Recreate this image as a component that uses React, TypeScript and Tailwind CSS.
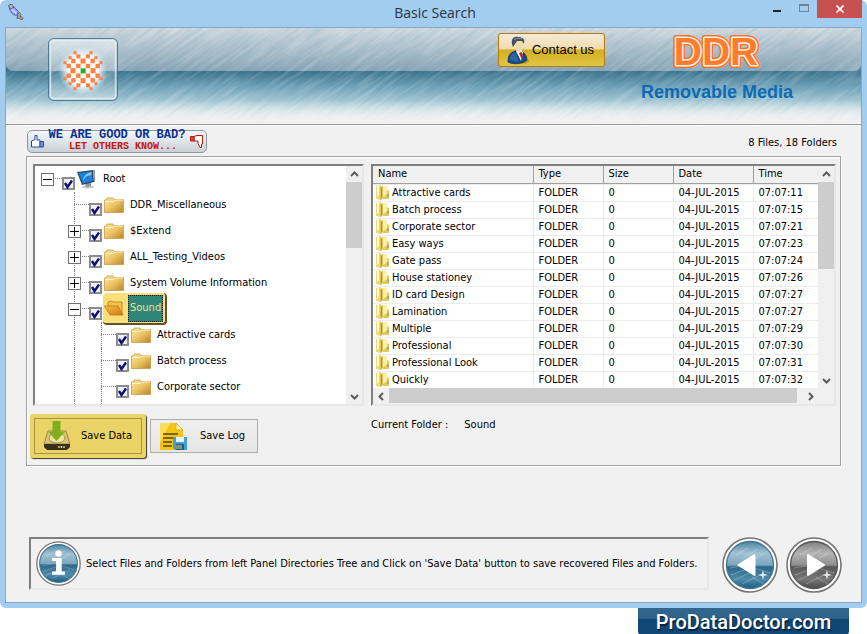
import React from 'react'

type TreeNode = {
  name: string
  level: number
  state: 'open' | 'closed' | 'leaf'
  icon: 'root' | 'folder'
  selected?: boolean
}

const tree: TreeNode[] = [
  { name: 'Root', level: 0, state: 'open', icon: 'root' },
  { name: 'DDR_Miscellaneous', level: 1, state: 'leaf', icon: 'folder' },
  { name: '$Extend', level: 1, state: 'closed', icon: 'folder' },
  { name: 'ALL_Testing_Videos', level: 1, state: 'closed', icon: 'folder' },
  { name: 'System Volume Information', level: 1, state: 'closed', icon: 'folder' },
  { name: 'Sound', level: 1, state: 'open', icon: 'folder', selected: true },
  { name: 'Attractive cards', level: 2, state: 'leaf', icon: 'folder' },
  { name: 'Batch process', level: 2, state: 'leaf', icon: 'folder' },
  { name: 'Corporate sector', level: 2, state: 'leaf', icon: 'folder' },
]

const files = [
  ['Attractive cards', '07:07:11'],
  ['Batch process', '07:07:15'],
  ['Corporate sector', '07:07:21'],
  ['Easy ways', '07:07:23'],
  ['Gate pass', '07:07:24'],
  ['House stationey', '07:07:26'],
  ['ID card Design', '07:07:27'],
  ['Lamination', '07:07:27'],
  ['Multiple', '07:07:29'],
  ['Professional', '07:07:30'],
  ['Professional Look', '07:07:31'],
  ['Quickly', '07:07:32'],
]

const logoCells = [
  [223, 157, 9], [271, 157, 9], [233, 168, 12], [262, 168, 12], [208, 172, 9], [286, 172, 9],
  [218, 182, 13], [247, 182, 15], [276, 182, 13], [193, 187, 9], [301, 187, 9],
  [204, 197, 13], [233, 197, 13], [262, 197, 13], [291, 197, 13],
  [217, 211, 15], [277, 211, 15],
  [204, 226, 13], [233, 226, 13], [262, 226, 13], [291, 226, 13],
  [218, 240, 13], [247, 241, 15], [276, 240, 13], [193, 235, 9], [301, 235, 9],
  [233, 255, 12], [262, 255, 12], [208, 250, 9], [286, 250, 9], [223, 265, 9], [271, 265, 9],
]

const UsbIcon = () => (
  <svg width="16" height="16" viewBox="0 0 16 16" aria-hidden="true">
    <path d="M0.500 1.500L3.500 0l2.500 3-4 2.500z" fill="#b9b2ad" stroke="#5f5a56" />
    <path d="M1.500 5.500L6 3l4.500 4.500L9 11.500 5 10.500z" fill="#8b9ff5" stroke="#5a68b8" />
    <path d="M4 5.500l4.500 4" stroke="#cdd6ff" strokeWidth="1.800" />
    <path d="M9.500 10.500l2-2 1.500 2-1 2 2 .5 1 2-2 .5-2-1.500-2 .5z" fill="#aaa5a2" stroke="#6c6764" />
  </svg>
)

const HeaderTexture = () => (
  <svg className="absolute inset-0 w-full h-full" aria-hidden="true">
    <defs>
      <linearGradient id="lower" x1="0" y1="0" x2="0" y2="1">
        <stop offset="0.45" stopColor="#39718c" />
        <stop offset="0.6" stopColor="#6b9db3" />
        <stop offset="0.78" stopColor="#aacbd7" />
        <stop offset="0.9" stopColor="#dfe8ec" />
        <stop offset="1" stopColor="#f1f1f1" />
      </linearGradient>
      <linearGradient id="upper" x1="0" y1="0" x2="0" y2="1">
        <stop offset="0.15" stopColor="#d0d9df" />
        <stop offset="1" stopColor="#86a3b5" />
      </linearGradient>
      <linearGradient id="fade" x1="0" y1="0" x2="0" y2="1">
        <stop offset="0.75" stopColor="#f1f1f1" stopOpacity="0" />
        <stop offset="1" stopColor="#f1f1f1" />
      </linearGradient>
      <filter id="brush" x="0" y="0" width="100%" height="100%">
        <feTurbulence type="fractalNoise" baseFrequency="0.025 0.3" numOctaves="4" seed="4" />
        <feColorMatrix values="0 0 0 0 1  0 0 0 0 1  0 0 0 0 1  2.6 0 0 0 -1.1" />
      </filter>
      <filter id="brushDark" x="0" y="0" width="100%" height="100%">
        <feTurbulence type="fractalNoise" baseFrequency="0.03 0.35" numOctaves="4" seed="11" />
        <feColorMatrix values="0 0 0 0 0.15  0 0 0 0 0.4  0 0 0 0 0.52  2.6 0 0 0 -1.2" />
      </filter>
    </defs>
    <rect width="100%" height="100%" fill="url(#lower)" />
    <rect width="100%" height="52" y="-9" rx="7" fill="url(#upper)" />
    <g transform="rotate(-36)">
      <rect x="-200" y="-100" width="2000" height="1400" filter="url(#brush)" opacity="0.2" />
      <rect x="-200" y="-100" width="2000" height="1400" filter="url(#brushDark)" opacity="0.24" />
    </g>
    <rect width="100%" height="100%" fill="url(#fade)" />
  </svg>
)

const LogoIcon = () => (
  <svg width="70" height="63" viewBox="142 113 210 189" aria-hidden="true">
    <defs>
      <radialGradient id="glow">
        <stop offset="0.6" stopColor="#fff" stopOpacity="0.95" />
        <stop offset="1" stopColor="#d9f3fb" stopOpacity="0" />
      </radialGradient>
      <linearGradient id="glass" x1="0" y1="0" x2="0" y2="1">
        <stop offset="0" stopColor="#fff" stopOpacity="0.5" />
        <stop offset="0.52" stopColor="#fff" stopOpacity="0.2" />
        <stop offset="0.54" stopColor="#fff" stopOpacity="0.1" />
        <stop offset="1" stopColor="#fff" stopOpacity="0.35" />
      </linearGradient>
    </defs>
    <rect x="144" y="115" width="206" height="185" rx="14" fill="url(#glass)" stroke="#3c6e8a" strokeWidth="3" />
    <rect x="149" y="120" width="196" height="175" rx="10" fill="none" stroke="#e3eef3" strokeWidth="5" opacity="0.8" />
    <circle cx="247" cy="211" r="74" fill="url(#glow)" />
    {logoCells.map(([x, y, s]) => (
      <rect key={`${x}-${y}`} x={x - s / 2} y={y - s / 2} width={s} height={s} fill="#ff7f3c" />
    ))}
    <rect x="240" y="204" width="15" height="15" fill="#1eb422" />
  </svg>
)

const PersonIcon = () => (
  <svg width="22" height="29" viewBox="0 0 22 29" aria-hidden="true">
    <ellipse cx="15" cy="25" rx="7" ry="3" fill="#8a6a10" opacity="0.4" />
    <path d="M1 26c0-7 2-9 7-11h6c4 2 6 5 6 9-4 4-14 5-19 2z" fill="#174a86" stroke="#0c2c58" strokeWidth="0.7" />
    <path d="M3 24c0-5 2-6 5-8l4 10z" fill="#3d79b9" opacity="0.6" />
    <path d="M9 15l6-1 1 3-2 8z" fill="#fff" />
    <path d="M12 17l2-1 2 2-1 6z" fill="#c31f2a" />
    <path d="M7 5c0-3 9-4 9 1 0 6-1 10-4 10S7 11 7 5z" fill="#f0d9ad" />
    <path d="M6 11C3 4 6 0 11 1c5 0 7 2 6 7l-2-3-5 0-2 3z" fill="#3f5062" />
    <path d="M7 4c2-2 6-2 8-1" stroke="#8c9db0" fill="none" />
  </svg>
)

const MonitorIcon = () => (
  <svg width="20" height="20" viewBox="0 0 20 20" aria-hidden="true">
    <ellipse cx="11" cy="18" rx="6" ry="1.500" fill="#c3c6c9" />
    <path d="M8 14l6-1v4l-5 1z" fill="#8f959b" />
    <path d="M0 3L16 1l1 12-12 3z" fill="#30495f" />
    <path d="M1.500 4L14.500 2.500l1 9.500L6 14.500z" fill="#1d7fe0" />
    <path d="M6 12C6 7 10 4 14.500 3v3c-4 0-7 2-8.500 6z" fill="#8cc8fa" />
    <path d="M16 1l2 0v12l-1 0z" fill="#8c99a5" />
  </svg>
)

const FolderIcon = ({ open }: { open?: boolean }) => (
  <svg width="20" height="16" viewBox="0 0 20 16" aria-hidden="true">
    <defs>
      <linearGradient id="folder" x1="0" y1="0" x2="1" y2="1">
        <stop offset="0" stopColor="#fbe9a3" />
        <stop offset="0.5" stopColor="#ecc363" />
        <stop offset="1" stopColor="#b98327" />
      </linearGradient>
      <linearGradient id="folderOpen" x1="0" y1="0" x2="1" y2="1">
        <stop offset="0" stopColor="#f8bf4a" />
        <stop offset="1" stopColor="#cf7615" />
      </linearGradient>
    </defs>
    {open ? (
      <g stroke="#b87a18" strokeWidth="0.8">
        <path d="M4 12V2l4-1 1 1h9v12z" fill="#f3c34c" />
        <path d="M0.500 6H14l5 9H6z" fill="url(#folderOpen)" />
      </g>
    ) : (
      <g>
        <path d="M0.500 3L3 2.500V1h6l1 1.500h9.500v13h-19z" fill="url(#folder)" stroke="#c99a45" strokeWidth="0.8" />
        <path d="M1 4.500h8.500L11 3h8" fill="none" stroke="#fdf4c8" />
      </g>
    )}
  </svg>
)

const SmallFolderIcon = () => (
  <svg className="shrink-0" width="13" height="16" viewBox="0 0 13 16" aria-hidden="true">
    <path d="M0 1l5-1v15l-5-1z" fill="#ecd976" />
    <path d="M1 1l2 0v9l-2 2z" fill="#fffbd2" />
    <path d="M4 2l3-1v12l-2 2-1 0z" fill="#dcc055" />
    <path d="M5 3l1-1v10l-1 2z" fill="#b78f3a" />
    <path d="M7 1h4v4l2 1v8H7z" fill="#e2c95a" />
    <path d="M7 1h4v8l-4 3z" fill="#faf0a6" />
    <path d="M12 9v3" stroke="#5b9a93" />
  </svg>
)

const SaveDataIcon = () => (
  <svg width="28" height="30" viewBox="0 0 28 30" aria-hidden="true">
    <path d="M5 10h18l4 13H1z" fill="#d8c274" stroke="#a08a3a" />
    <ellipse cx="14" cy="17" rx="8" ry="5" fill="#efe0a0" stroke="#a8954e" />
    <path d="M1 23h26v3l-3 3H4l-3-3z" fill="#38301c" />
    <path d="M16 25v2M18.500 25v2M21 25v2" stroke="#f3e08a" strokeWidth="1.3" />
    <path d="M9.500 0h8v11h4l-8 9-8-9h4z" fill="#7db021" />
  </svg>
)

const SaveLogIcon = () => (
  <svg width="28" height="29" viewBox="0 0 28 29" aria-hidden="true">
    <path d="M1 1h16l7 7v20H1z" fill="#f6c417" />
    <path d="M1 1h10l-10 20z" fill="#fadd5a" />
    <path d="M17 1l7 7h-7z" fill="#fdf0a8" stroke="#d8a90c" strokeWidth="0.8" />
    <path d="M4 12h15M4 16h12M4 20h9M4 24h9" stroke="#5a4410" strokeWidth="1.3" />
    <path d="M14 15h14v13H16l-2-2z" fill="#3fa0dc" />
    <path d="M17 15h8v5h-8z" fill="#e4f2fb" />
    <path d="M17 22h8v6h-8z" fill="#1d5e92" />
    <path d="M17 24h6M17 26h6" stroke="#f2cb2c" />
  </svg>
)

const Thumb = ({ down }: { down?: boolean }) => (
  <svg width="13" height="13" viewBox="0 0 13 13" aria-hidden="true">
    {down ? (
      <g stroke="#bf1a0c">
        <path d="M4 1.500L7 .5H12.500V9H11.500V12.500H10L8 8.500V6H4z" fill="#fff" />
        <path d="M0.500 1.500H4V6H0.500z" fill="#e0483a" />
      </g>
    ) : (
      <g stroke="#2747a8">
        <path d="M0.500 6L4 4.500V0.500h2V5h3v7H0.500z" fill="#fff" />
        <path d="M9 6.500h3.500V12H9z" fill="#7b93da" />
      </g>
    )}
  </svg>
)

const Globe = ({ kind }: { kind: 'info' | 'back' | 'next' }) => {
  const gray = kind === 'next'
  const size = kind === 'info' ? 'size-[45px]' : 'size-14'
  return (
    <svg className={`${size} shrink-0 block`} viewBox="0 0 56 56" aria-hidden="true">
      <defs>
        <linearGradient id={`ball-${kind}`} x1="0" y1="0" x2="0" y2="1">
          <stop offset="0" stopColor={gray ? '#808080' : '#4b86a4'} />
          <stop offset="0.25" stopColor={gray ? '#b4b4b4' : '#a3c3d3'} />
          <stop offset="0.5" stopColor={gray ? '#8f8f8f' : '#7aa7bf'} />
          <stop offset="0.54" stopColor={gray ? '#575757' : '#2b6788'} />
          <stop offset="0.8" stopColor={gray ? '#777' : '#4d8cab'} />
          <stop offset="1" stopColor={gray ? '#4b4b4b' : '#1d5c82'} />
        </linearGradient>
      </defs>
      <circle cx="28" cy="28" r="27" fill="#fdfdfd" stroke="#757575" strokeWidth="1.6" />
      <circle cx="28" cy="28" r="23.500" fill={`url(#ball-${kind})`} stroke={gray ? '#555' : '#3f7390'} strokeWidth="1.3" />
      <path
        d="M9 38l16-6M12 43l20-9M20 47l22-11M8 31l12-2M32 31l16 5M30 40l12 7M14 18l12-7M20 22l16-10M32 22l10-6"
        stroke="#fff"
        strokeWidth="1"
        opacity="0.25"
      />
      {kind === 'info' && (
        <g fill="#fff">
          <circle cx="28" cy="15.500" r="4" />
          <path d="M20 21h12v17h4v4H20v-4h5V25h-5z" />
        </g>
      )}
      {kind === 'back' && <path d="M16.500 28L32.500 18v20z" fill="#fff" stroke="#fff" strokeWidth="2" strokeLinejoin="round" />}
      {kind === 'next' && <path d="M38 28L22 18v20z" fill="#fff" stroke="#fff" strokeWidth="2" strokeLinejoin="round" />}
      {kind !== 'info' && (
        <path d="M41 33l1 4 4 1-4 1-1 4-1-4-4-1 4-1z" fill="#fff" opacity="0.85" />
      )}
    </svg>
  )
}

const Arrow = ({ dir }: { dir: 'up' | 'down' | 'left' | 'right' }) => {
  const paths = {
    up: 'M1 6L4.500 2.500L8 6',
    down: 'M1 3L4.500 6.500L8 3',
    left: 'M6 1L2.500 4.500L6 8',
    right: 'M3 1L6.500 4.500L3 8',
  }
  return (
    <button aria-label={`Scroll ${dir}`} className="size-4 shrink-0 flex items-center justify-center">
      <svg width="9" height="9" viewBox="0 0 9 9">
        <path d={paths[dir]} fill="none" stroke="#5c5c5c" strokeWidth="2" />
      </svg>
    </button>
  )
}

const Guide = ({ node, depth }: { node: TreeNode; depth: number }) => {
  if (depth < node.level) {
    return (
      <span className="w-[27px] h-full shrink-0 flex pl-3">
        {depth > 0 && <span className="border-l border-dotted border-[#808080]" />}
      </span>
    )
  }
  const below = node.level > 0
  return (
    <span className="relative w-[27px] h-full shrink-0 flex items-center">
      {below && <span className="absolute left-3 inset-y-0 border-l border-dotted border-[#808080]" />}
      <span className="absolute left-3 right-0 top-3 border-t border-dotted border-[#808080]" />
      {node.state !== 'leaf' && (
        <button
          aria-label={node.state === 'open' ? `Collapse ${node.name}` : `Expand ${node.name}`}
          className="relative ml-1.5 size-[13px] bg-white border border-[#707070] flex items-center justify-center"
        >
          <svg width="9" height="9" viewBox="0 0 9 9">
            <path d={node.state === 'open' ? 'M0 4.500h9' : 'M0 4.500h9M4.500 0v9'} stroke="#000" />
          </svg>
        </button>
      )}
    </span>
  )
}

const TreeRow = ({ node }: { node: TreeNode }) => {
  const id = `node-${node.level}-${node.name}`
  return (
    <li className="h-[26px] flex items-center">
      {Array.from({ length: node.level + 1 }, (_, depth) => (
        <Guide key={depth} node={node} depth={depth} />
      ))}
      <span className="relative size-[13px] mt-2 shrink-0">
        <input
          id={id}
          type="checkbox"
          defaultChecked
          className="peer block appearance-none size-[13px] bg-[#f2f2f2] border-2 border-[#8c8c8c]"
        />
        <svg className="hidden peer-checked:block absolute inset-0 pointer-events-none" width="13" height="13" viewBox="0 0 13 13">
          <path d="M3 6l2.500 4L10 3.500" fill="none" stroke="#0d0d7c" strokeWidth="2.400" />
        </svg>
      </span>
      {node.selected ? (
        <span className="ml-px h-8 flex items-center gap-1 bg-[#fbe07a] pl-px pr-0.5 rounded-sm border-r-2 border-b-2 border-[#5e5230]">
          <FolderIcon open />
          <label htmlFor={id} className="h-[27px] px-px flex items-center bg-[#2f8577] border border-dotted border-[#1c1c1c] text-[#f1e493]">
            {node.name}
          </label>
        </span>
      ) : (
        <>
          <span className="ml-0.5 shrink-0">{node.icon === 'root' ? <MonitorIcon /> : <FolderIcon />}</span>
          <label htmlFor={id} className="ml-1.5">{node.name}</label>
        </>
      )}
    </li>
  )
}

const FileTable = () => (
  <table className="flex-1 min-w-0 table-fixed border-collapse text-left">
    <colgroup>
      <col />
      <col className="w-[70px]" />
      <col className="w-[70px]" />
      <col className="w-20" />
      <col className="w-[65px]" />
    </colgroup>
    <thead>
      <tr className="h-[17px] bg-[#f0f0f0]">
        {['Name', 'Type', 'Size', 'Date', 'Time'].map((head) => (
          <th key={head} className="p-0 pl-[5px] font-normal border-r border-b border-[#a0a0a0] last:border-r-0">
            {head}
          </th>
        ))}
      </tr>
    </thead>
    <tbody>
      <tr className="h-px border-b border-[#ececec]" aria-hidden="true">
        <td colSpan={5} className="p-0" />
      </tr>
      {files.map(([name, time]) => (
        <tr key={name} className="h-[17px] border-b border-[#ececec]">
          <td className="p-0 pl-[3px] border-r border-[#ececec]">
            <span className="flex items-center gap-[3px]">
              <SmallFolderIcon />
              {name}
            </span>
          </td>
          <td className="p-0 pl-[5px] border-r border-[#ececec]">FOLDER</td>
          <td className="p-0 pl-[5px] border-r border-[#ececec]">0</td>
          <td className="p-0 pl-[5px] border-r border-[#ececec]">04-JUL-2015</td>
          <td className="p-0 pl-[5px]">{time}</td>
        </tr>
      ))}
    </tbody>
  </table>
)

const App = () => {
  return (
    <div className="bg-white flex flex-col text-[11px] leading-4 text-black font-['DejaVu_Sans_Condensed','DejaVu_Sans',sans-serif]">
      <div className="bg-[#a2cdf0] px-[5px] pb-[5px] rounded-md">
        <header className="h-[27px] flex items-center">
          <div className="flex-1 pl-[3px] pb-1">
            <UsbIcon />
          </div>
          <h1 className="pb-0.5 font-['Open_Sans',sans-serif] text-sm text-[#2a3440]">Basic Search</h1>
          <div className="flex-1 h-full flex items-start justify-end">
            <button aria-label="Minimize" className="w-[26px] h-[18px] flex items-end justify-center pb-1.5">
              <span className="w-2 h-0.5 bg-[#222]" />
            </button>
            <button aria-label="Maximize" className="w-[27px] h-4 flex items-center justify-center">
              <span className="w-2.5 h-2 border border-t-2 border-[#6d8394]" />
            </button>
            <button aria-label="Close" className="w-[45px] h-[18px] bg-[#c75050] flex items-center justify-center">
              <svg width="8" height="8" viewBox="0 0 8 8">
                <path d="M0.500 0.500l7 7M7.500 0.500l-7 7" stroke="#fff" strokeWidth="1.700" />
              </svg>
            </button>
          </div>
        </header>

        <main className="bg-[#f1f1f1] border border-[#84a8c6]">
          <div className="relative h-[97px] border-b border-[#9a9a9a]">
            <HeaderTexture />
            <div className="relative h-full flex items-start pl-[42px] pr-[68px]">
              <div className="pt-2.5">
                <LogoIcon />
              </div>
              <button className="ml-auto mt-[5px] w-[107px] h-[34px] flex items-center gap-[3px] pl-2 rounded-[3px] border border-[#b5790c] bg-[linear-gradient(#f8ead6_0%,#f1dcae_46%,#d3b021_50%,#e0c443_100%)] font-['Liberation_Sans',Arial,sans-serif] text-[13px]">
                <PersonIcon />
                Contact us
              </button>
              <div className="ml-9 flex flex-col items-center">
                <svg width="104" height="48" viewBox="0 0 104 48">
                  <g
                    className="font-['Liberation_Sans',Arial,sans-serif] font-bold text-[39px]"
                    textAnchor="middle"
                    strokeLinejoin="round"
                  >
                    <text x="51" y="37" fill="#ff6f1e" stroke="#ff6f1e" strokeWidth="6" aria-hidden="true">DDR</text>
                    <text x="51" y="37" fill="#ff7b2e" stroke="#fff5e6" strokeWidth="3" className="[paint-order:stroke]">DDR</text>
                  </g>
                </svg>
                <p className="mt-1 font-['Liberation_Sans',Arial,sans-serif] font-bold text-lg leading-6 text-[#0c6bb4]">
                  Removable Media
                </p>
              </div>
            </div>
          </div>

          <div className="h-[31px] border-t border-white flex items-center justify-between pl-[21px] pr-6">
            <a
              href="#feedback"
              className="w-[180px] h-[23px] px-[3px] rounded-[5px] border border-[#8f979d] bg-gradient-to-b from-[#f3f8fb] to-[#c9d1d6] flex items-center justify-between font-['Liberation_Mono',monospace] font-bold leading-[11px] whitespace-nowrap"
            >
              <Thumb />
              <span className="flex-1 flex flex-col items-center">
                <span className="text-[12px] leading-[11px] text-[#0b3192]">WE ARE GOOD OR BAD?</span>
                <span className="text-[10px] leading-[11px] text-[#c41809]">&nbsp;&nbsp;LET OTHERS KNOW...</span>
              </span>
              <Thumb down />
            </a>
            <p className="pt-1">8 Files, 18 Folders</p>
          </div>

          <section className="mx-5 border border-[#a0a0a0] shadow-[inset_1px_1px_#fff,1px_1px_#fff] pt-[7px] pb-[7px]">
            <div className="px-1.5 pr-1 grid grid-cols-[331px_minmax(0,1fr)] gap-[7px]">
              <div className="h-[242px] flex bg-white border-2 border-t-[#808080] border-l-[#808080] border-r-[#e8e8e8] border-b-[#e8e8e8] overflow-hidden">
                <ul className="flex-1">
                  {tree.map((node) => (
                    <TreeRow key={node.name} node={node} />
                  ))}
                  <li className="h-1 flex" aria-hidden="true">
                    <span className="ml-[39px] w-[27px] border-l border-dotted border-[#808080]" />
                    <span className="border-l border-dotted border-[#808080]" />
                  </li>
                </ul>
                <div className="w-4 bg-[#f0f0f0] flex flex-col">
                  <Arrow dir="up" />
                  <span className="h-[66px] bg-[#cdcdcd]" />
                  <span className="flex-1" />
                  <Arrow dir="down" />
                </div>
              </div>

              <div className="h-[242px] flex flex-col bg-white border-2 border-t-[#808080] border-l-[#808080] border-r-[#e8e8e8] border-b-[#e8e8e8]">
                <div className="flex-1 min-h-0 flex items-start">
                  <FileTable />
                  <div className="w-4 h-full bg-[#f0f0f0] flex flex-col">
                    <Arrow dir="up" />
                    <span className="h-[87px] bg-[#cdcdcd]" />
                    <span className="flex-1" />
                    <Arrow dir="down" />
                  </div>
                </div>
                <div className="h-4 shrink-0 bg-[#f0f0f0] flex pr-4">
                  <Arrow dir="left" />
                  <span className="flex-1 h-[15px] bg-[#cdcdcd]" />
                  <span className="w-[5px]" />
                  <Arrow dir="right" />
                </div>
              </div>
            </div>

            <div className="mt-2 pl-[3px] flex items-start">
              <div className="w-[341px] flex items-center gap-1">
                <div className="p-1 bg-[#ead367] rounded-[3px] shadow-[1px_1px_1px_#3c3520]">
                  <button className="w-[108px] h-9 pl-2 flex items-center gap-2.5 border border-[#a89443]">
                    <SaveDataIcon />
                    Save Data
                  </button>
                </div>
                <button className="w-[108px] h-[34px] pl-2 flex items-center gap-[13px] border border-[#adadad] bg-gradient-to-b from-[#efefef] to-[#e6e6e6]">
                  <SaveLogIcon />
                  Save Log
                </button>
              </div>
              <p className="pt-[3px]">Current Folder :</p>
              <p className="pt-[3px] pl-4">Sound</p>
            </div>
          </section>

          <footer className="mt-[71px] pl-[23px] pr-[19px] pb-[9px] flex items-start">
            <div className="flex-1 h-[53px] pl-[5px] flex items-center gap-[5px] border-2 border-t-[#808080] border-l-[#808080] border-r-[#e8e8e8] border-b-[#e8e8e8]">
              <Globe kind="info" />
              <p>
                Select Files and Folders from left Panel Directories Tree and Click on 'Save Data' button to save recovered Files and
                Folders.
              </p>
            </div>
            <button aria-label="Back" className="ml-[13px]">
              <Globe kind="back" />
            </button>
            <button aria-label="Next" className="ml-2">
              <Globe kind="next" />
            </button>
          </footer>
        </main>
      </div>

      <a
        href="#prodatadoctor"
        className="self-end mr-[18px] w-[211px] h-[27px] flex items-center justify-center rounded-b bg-[linear-gradient(#33668d_0%,#2f628a_38%,#0f4876_42%,#0f4876_100%)] font-['Roboto',sans-serif] font-medium text-xl text-white [text-shadow:1px_2px_1px_#06213a]"
      >
        ProDataDoctor.com
      </a>
    </div>
  )
}

export default App
